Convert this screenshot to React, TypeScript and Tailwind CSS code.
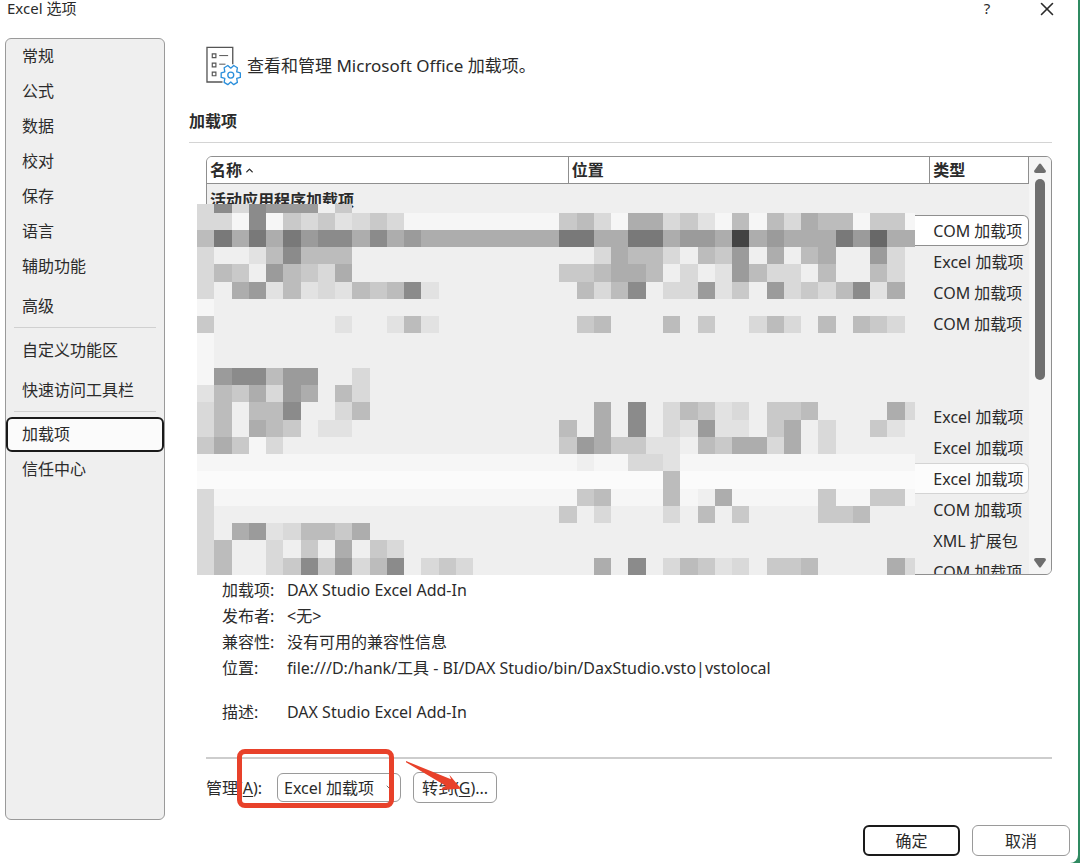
import { useState } from 'react';
import { ChevronDown, ChevronUp, X } from 'lucide-react';
import clsx from 'clsx';

const navGroups = [
  ['常规', '公式', '数据', '校对', '保存', '语言', '辅助功能', '高级'],
  ['自定义功能区', '快速访问工具栏'],
  ['加载项', '信任中心'],
];

const spacedItems = ['高级', '快速访问工具栏'];

interface AddInRow {
  type: string;
  state?: 'selected' | 'hover';
}

const rows: AddInRow[] = [
  { type: 'COM 加载项', state: 'selected' },
  { type: 'Excel 加载项' },
  { type: 'COM 加载项' },
  { type: 'COM 加载项' },
  { type: '' },
  { type: '' },
  { type: 'Excel 加载项' },
  { type: 'Excel 加载项' },
  { type: 'Excel 加载项', state: 'hover' },
  { type: 'COM 加载项' },
  { type: 'XML 扩展包' },
  { type: 'COM 加载项' },
];

const details = [
  { label: '加载项:', value: 'DAX Studio Excel Add-In' },
  { label: '发布者:', value: '<无>' },
  { label: '兼容性:', value: '没有可用的兼容性信息' },
  { label: '位置:', value: 'file:///D:/hank/工具 - BI/DAX Studio/bin/DaxStudio.vsto|vstolocal' },
];

// One character per mosaic tile, see tileColors
const mosaicTop = 'd8d8999.c';
const mosaic = [
  'ddf8fcdcedcdfffffffffcbdfaadcefbfbdabbfccf',
  'b7a7a7988a8a9aaaaaaaa77aa77a99a4a9aaa796aa',
  'd..eb8bbb..............dabbd.bc9.a.ba..9d.',
  'dbc.9bcda............ccbaab.d.e9bdd.b..bd.',
  'd.a9ebedebcb8e........bdb8.dd9ec.9dcdb8ea.',
  'f.........................................',
  'c.......e..ebe........cb...b.c..dbd.b.bcd.',
  'f.........................................',
  'f.........................................',
  'f988b99..d................................',
  'ebcad9a.bd................................',
  'db.bb8..db.............a.8.dbced.ccb....ad',
  'db.abc.ee............b.a.8.de9ee.ca.d..ce.',
  'cacfd................c9accee.bcaada.d.....',
  'ffffffffffffffffffffff.ffddeffffffffffffff',
  'gggggggggggggggggggggggggggbgggggggggggggg',
  'dfffffffffffffffffffffcbfffbf.afffffcffccf',
  'd....................c.d...d.b.c....ccb...',
  'd.a9edbbca................................',
  'db..d.c.a.cd..............................',
  'db..dc8c9db8.dcd.......a.8.dbced.ccb....ad',
];

const tileColors: Record<string, string> = {
  '4': '#434343',
  '6': '#686868',
  '7': '#797979',
  '8': '#8b8b8b',
  '9': '#9b9b9b',
  a: '#adadad',
  b: '#bcbcbc',
  c: '#c9c9c9',
  d: '#d9d9d9',
  e: '#e2e2e2',
  f: '#f6f6f6',
  g: '#fbfbfb',
  '.': '#efefef',
};

function Mosaic() {
  return (
    <svg
      viewBox="0 0 416 215"
      preserveAspectRatio="none"
      shapeRendering="crispEdges"
      aria-hidden="true"
      className="pointer-events-none absolute top-12 -left-[9px] h-[371px] w-[calc(100%-128px)]"
    >
      <rect y="5" width="416" height="210" fill="#efefef" />
      {mosaicTop.split('').map((tile, x) => (
        <rect key={x} x={x * 10} y="0" width="10" height="5" fill={tileColors[tile]} />
      ))}
      {mosaic.map((line, y) =>
        line.split('').map((tile, x) =>
          tile === '.' ? null : (
            <rect key={`${x}-${y}`} x={x * 10} y={5 + y * 10} width="10" height="10" fill={tileColors[tile]} />
          )
        )
      )}
    </svg>
  );
}

function AddInsIcon() {
  return (
    <svg viewBox="615 140 112 122" fill="none" aria-hidden="true" className="h-[41px] w-[37px] shrink-0">
      <g stroke="#555" strokeWidth="4">
        <path d="M668 251H621V146H699V197" />
        <path d="M637 166h11v11h-11zM637 194h11v11h-11zM637 221h11v11h-11z" strokeWidth="3.5" />
        <path d="M658 171H685M658 197H677" strokeWidth="3" />
      </g>
      <g stroke="#2b8fdb" strokeWidth="4" strokeLinejoin="round">
        <path d="M722 223V237L711 240L713 252L702 259L693 251L684 259L673 252L675 240L664 237V223L675 220L673 208L684 201L693 209L702 201L713 208L711 220Z" />
        <circle cx="693" cy="230" r="9" />
      </g>
    </svg>
  );
}

function Sidebar() {
  const [active, setActive] = useState('加载项');

  return (
    <nav className="w-40 shrink-0 self-stretch rounded-md border border-[#9a9a9a] bg-[#efefef]">
      {navGroups.map((group, index) => (
        <div key={index}>
          {index > 0 && <hr className="mx-2 mt-[3px] mb-[5px] border-[#d0d0d0]" />}
          {group.map((item) => (
            <button
              key={item}
              type="button"
              onClick={() => setActive(item)}
              className={clsx(
                'flex h-[35px] w-full items-center rounded-md border-2 px-[14px] pb-px text-left',
                spacedItems.includes(item) && 'mt-[5px]',
                item === active ? 'border-[#1a1a1a] bg-[#fbfbfb]' : 'border-transparent'
              )}
            >
              {item}
            </button>
          ))}
        </div>
      ))}
    </nav>
  );
}

function AddInList() {
  return (
    <div className="relative ml-[17px]">
      <div className="flex h-[419px] overflow-hidden rounded-md border border-[#8f8f8f] bg-[#efefef]">
        <div className="min-w-0 flex-1">
          <table className="w-full table-fixed border-separate border-spacing-0 text-left">
            <thead>
              <tr className="h-[27px] bg-white">
                <th className="w-[44%] border-r border-b border-[#8f8f8f] px-[3px] py-0">
                  <span className="flex items-center gap-[2px]">
                    名称 <ChevronUp size={11} strokeWidth={3} />
                  </span>
                </th>
                <th className="w-[44%] border-r border-b border-[#8f8f8f] px-[3px] py-0">位置</th>
                <th className="border-r border-b border-[#8f8f8f] px-[3px] py-0">类型</th>
              </tr>
            </thead>
            <tbody>
              <tr className="h-[31px]">
                <th colSpan={3} className="px-[3px] py-0">活动应用程序加载项</th>
              </tr>
              {rows.map((row, index) => (
                <tr key={index} className="h-[31px] whitespace-nowrap">
                  <td className="p-0" />
                  <td
                    className={clsx(
                      'p-0',
                      row.state === 'selected' && 'border-y border-[#8f8f8f] bg-white',
                      row.state === 'hover' && 'border-y border-[#d4d4d4] bg-[#fcfcfc]'
                    )}
                  />
                  <td
                    className={clsx(
                      'px-[3px] py-0',
                      row.state === 'selected' && 'rounded-r-md border-y border-r border-[#8f8f8f] bg-white',
                      row.state === 'hover' && 'rounded-r-md border-y border-r border-[#d4d4d4] bg-[#fcfcfc]'
                    )}
                  >
                    {row.type}
                  </td>
                </tr>
              ))}
            </tbody>
          </table>
        </div>
        {/* Scrollbar */}
        <div className="flex w-[22px] shrink-0 flex-col items-center bg-[#f5f5f5] py-[6px]">
          <svg viewBox="0 0 12 10" className="h-[10px] w-3" fill="#6e6e6e" aria-hidden="true">
            <path d="M5 1Q6 0 7 1L12 8Q12 10 10 10H2Q0 10 0 8Z" />
          </svg>
          <div className="mt-[6px] h-[201px] w-[10px] rounded-full bg-[#6e6e6e]" />
          <svg viewBox="0 0 12 10" className="mt-auto h-[10px] w-3" fill="#6e6e6e" aria-hidden="true">
            <path d="M5 9Q6 10 7 9L12 2Q12 0 10 0H2Q0 0 0 2Z" />
          </svg>
        </div>
      </div>
      <Mosaic />
    </div>
  );
}

function ManageRow() {
  return (
    <div className="relative mt-[13px] ml-[17px] flex items-center">
      <label htmlFor="manage" className="w-[71px]">
        管理(<u className="underline-offset-2">A</u>):
      </label>
      <div className="relative flex">
        <select
          id="manage"
          className="h-[29px] w-[124px] appearance-none rounded-md border border-[#9a9a9a] bg-white px-[6px]"
        >
          <option>Excel 加载项</option>
          <option>COM 加载项</option>
        </select>
        <ChevronDown size={8} className="pointer-events-none absolute top-[10px] right-2" />
      </div>
      <button type="button" className="ml-3 h-[31px] w-[84px] rounded-md border border-[#9a9a9a]">
        转到(<u className="underline-offset-2">G</u>)...
      </button>

      {/* Highlight and arrow */}
      <div className="pointer-events-none absolute -top-[23px] left-[31px] h-[59px] w-[157px] rounded-lg border-5 border-[#e8412a]" />
      <svg
        viewBox="648 94 168 90"
        fill="#e8412a"
        aria-hidden="true"
        className="pointer-events-none absolute -top-[11px] left-[200px] h-[30px] w-14"
      >
        <path d="M648 94L783 149L778 135L813 177L750 181L767 168L648 98Z" />
      </svg>
    </div>
  );
}

export default function App() {
  return (
    <div className="min-h-screen bg-[#2f8a61] pr-[2px] font-['Noto_Sans','Noto_Sans_CJK_SC',sans-serif] text-[16px] leading-[26px] text-[#2b2b2b]">
      <div className="flex min-h-screen flex-col rounded-br-lg bg-white pb-[7px]">
        {/* Title bar */}
        <header className="flex h-[38px] items-start justify-between pr-5 pl-[7px]">
          <h1 className="text-[15px] leading-[17px]">Excel 选项</h1>
          <div className="flex items-start gap-[41px]">
            <button type="button" aria-label="帮助" className="w-4 text-[15px] leading-[17px]">
              ?
            </button>
            <button type="button" aria-label="关闭" className="-mt-[2px]">
              <X size={22} strokeWidth={1.75} />
            </button>
          </div>
        </header>

        <div className="flex flex-1 gap-6 pr-[26px] pl-[5px]">
          <Sidebar />
          <main className="flex min-w-0 flex-1 flex-col">
            <div className="mt-[7px] ml-4 flex items-center gap-[5px] text-[17px]">
              <AddInsIcon />
              <p>查看和管理 Microsoft Office 加载项。</p>
            </div>
            <h2 className="mt-[22px] mb-2 font-bold">加载项</h2>
            <hr className="mb-[13px] border-[#d4d4d4]" />

            <AddInList />

            <dl className="mt-[2px] ml-[33px]">
              {details.map((item) => (
                <div key={item.label} className="flex">
                  <dt className="w-[65px] shrink-0">{item.label}</dt>
                  <dd>{item.value}</dd>
                </div>
              ))}
              <div className="mt-[18px] flex">
                <dt className="w-[65px] shrink-0">描述:</dt>
                <dd>DAX Studio Excel Add-In</dd>
              </div>
            </dl>

            <hr className="mt-8 ml-[17px] border-t-2 border-[#cdcdcd]" />
            <ManageRow />
          </main>
        </div>

        <footer className="mt-[5px] flex justify-end gap-3 pr-2">
          <button type="button" className="h-[31px] w-[97px] rounded-md border-2 border-[#1a1a1a]">
            确定
          </button>
          <button type="button" className="h-[31px] w-[98px] rounded-md border border-[#9a9a9a]">
            取消
          </button>
        </footer>
      </div>
    </div>
  );
}
